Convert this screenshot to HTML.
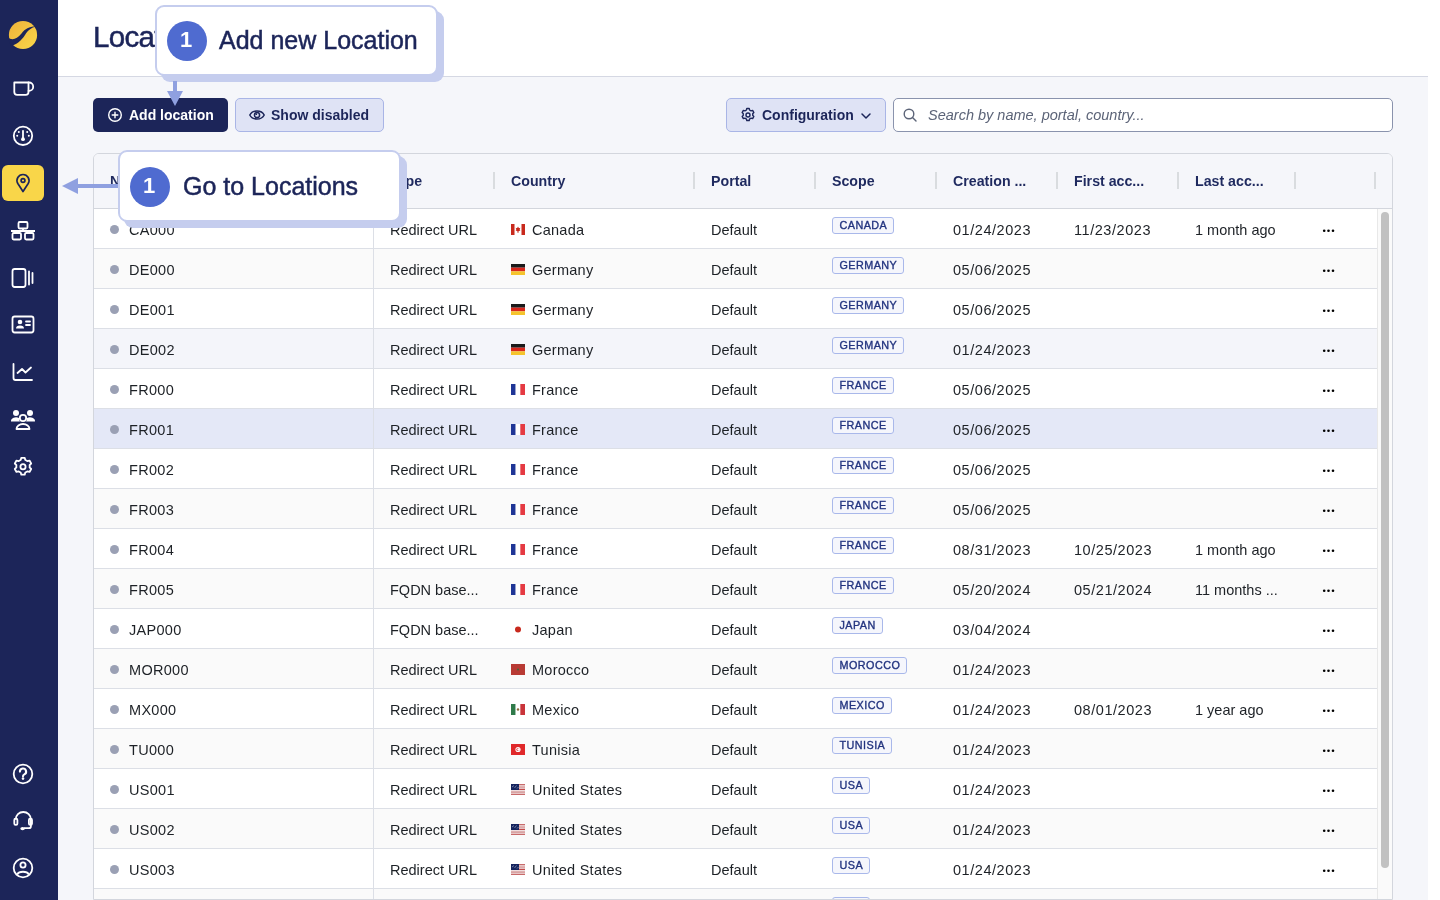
<!DOCTYPE html>
<html><head><meta charset="utf-8">
<style>
*{box-sizing:border-box;margin:0;padding:0}
html,body{width:1440px;height:900px;overflow:hidden;background:#fff;font-family:"Liberation Sans",sans-serif;}
#side{position:absolute;left:0;top:0;width:58px;height:900px;background:#1c2559;}
#side svg{position:absolute;left:0;top:0}
#active{position:absolute;left:2px;top:165px;width:42px;height:36px;background:#f9d649;border-radius:6px}
#main{position:absolute;left:58px;top:0;width:1370px;height:900px;background:#f5f6fa;}
#hdr{position:absolute;left:0;top:0;width:1370px;height:77px;background:#fff;border-bottom:1px solid #d5d8e3}
#title{position:absolute;left:35px;top:20px;font-size:29.5px;color:#1c2559;-webkit-text-stroke:0.5px #1c2559;letter-spacing:-0.7px}
.btn{position:absolute;top:98px;height:34px;border-radius:5px;font-size:14px;font-weight:bold;white-space:nowrap}
.btn span{position:absolute;top:9px}
#show span,#conf span{top:8px}
.btn svg{position:absolute}
#add{left:35px;width:135px;background:#1c2559;color:#fff}
#show{left:177px;width:149px;background:#dfe3f5;border:1px solid #a9b5e6;color:#1c2559}
#conf{left:668px;width:160px;background:#dfe3f5;border:1px solid #a9b5e6;color:#1c2559}
#search{position:absolute;left:835px;top:98px;width:500px;height:34px;background:#fff;border:1px solid #8a93ad;border-radius:5px}
#search span{position:absolute;left:34px;top:8px;font-size:14.5px;font-style:italic;color:#5c6478}
#search svg{position:absolute;left:8px;top:7.5px}
#table{position:absolute;left:93px;top:153px;width:1300px;height:747px;background:#fff;border:1px solid #d3d6dd;border-radius:6px 6px 0 0;overflow:hidden}
#thead{position:absolute;left:0;top:0;width:1298px;height:55px;background:#f5f6fa;border-bottom:1px solid #d3d6dd}
.h{position:absolute;top:19px;font-size:14.2px;font-weight:bold;color:#1f2a5f;white-space:nowrap}
.hs{position:absolute;top:18px;width:2px;height:17px;background:#d9dcdf}
.row{position:absolute;left:0;width:1283px;height:40px;border-bottom:1px solid #dcdfe6}
.t{position:absolute;top:13px;font-size:14.5px;color:#1d2126;white-space:nowrap}
.d{letter-spacing:0.55px}
.n{letter-spacing:0.3px}
.c{letter-spacing:0.25px}
.dot{position:absolute;left:16px;top:15.5px;width:9px;height:9px;border-radius:50%;background:#9aa0b4}
.sep{position:absolute;left:279px;top:0;width:1px;height:40px;background:#dcdfe6}
.flag{position:absolute;top:15px;width:14px;height:11px}
.flag svg{display:block}
.badge{position:absolute;top:8px;height:17px;padding:0 6px 0 6.5px;border:1px solid #a9b8ea;background:#f5f6fc;border-radius:3px;font-size:10.8px;font-weight:normal;-webkit-text-stroke:0.35px #22337f;color:#22337f;letter-spacing:0.45px;line-height:15px;white-space:nowrap}
.more{position:absolute;left:1228px;top:19px;width:14px;height:5px}
.more svg{display:block}
#track{position:absolute;left:1283px;top:55px;width:15px;height:760px;background:#fafafa;border-left:1px solid #e8e8e8}
#thumb{position:absolute;left:1287px;top:58px;width:8px;height:656px;border-radius:4px;background:#c1c1c1}
.co{position:absolute;background:#fff;border:2px solid #c5cdee;border-radius:9px;box-shadow:6px 6px 0 0 #c5cdee}
.co .num{position:absolute;width:40px;height:40px;border-radius:50%;background:#4f6bd0;color:#fff;font-size:22px;font-weight:bold;text-align:center;line-height:38px;text-indent:-2px}
.co .ct{position:absolute;font-size:25px;color:#1c2559;white-space:nowrap;-webkit-text-stroke:0.5px #1c2559}
.t,.h,.btn span,#search span,.co .ct,.co .num,#title,.badge{will-change:transform}
</style></head>
<body>
<div id="side">
  <div id="active"></div>
  <svg width="58" height="900" viewBox="0 0 58 900">
<defs><linearGradient id="lg" x1="0" y1="0" x2="1" y2="1"><stop offset="0" stop-color="#eeb23a"/><stop offset="1" stop-color="#fad84a"/></linearGradient></defs>
<circle cx="23" cy="35" r="14.1" fill="url(#lg)"/>
<path d="M7.5 37.2 C 12 40.8, 16.5 39.5, 21.5 33.5 C 25.5 28.5, 29.5 26.3, 36.5 26.6 C 31 27.6, 28 30.5, 25 35 C 21 41, 16.5 44.6, 11 45.8 Z" fill="#1c2559"/>
<g fill="none" stroke="#fff" stroke-width="1.8" stroke-linecap="round" stroke-linejoin="round">
 <path d="M14.3 82.5 H28.5 V92 a2.8 2.8 0 0 1 -2.8 2.8 H17.1 a2.8 2.8 0 0 1 -2.8 -2.8 Z"/>
 <path d="M28.5 82.5 H29 a4.2 4.2 0 0 1 0 8.4 H28.5"/>
 <circle cx="23" cy="135.8" r="9.2"/>
 <path d="M23 130.8 V138.5"/>
</g>
<g fill="#fff"><circle cx="23" cy="139.2" r="1.9"/><circle cx="18.8" cy="132" r="1"/><circle cx="27.2" cy="132" r="1"/><circle cx="17.2" cy="135.8" r="1"/><circle cx="28.8" cy="135.8" r="1"/></g>
<g fill="none" stroke="#1c2559" stroke-width="1.7" stroke-linejoin="round">
 <path d="M23 191.5 L17.8 183.5 A6 6 0 1 1 28.2 183.5 Z"/>
 <circle cx="23" cy="180.5" r="1.9"/>
</g>
<g fill="none" stroke="#fff" stroke-width="1.8" stroke-linejoin="round">
 <rect x="18.5" y="222" width="9" height="6.5" rx="1.2"/>
 <path d="M23 228.5 V231 M11 231 H35"/>
 <rect x="12.5" y="233" width="8.5" height="6.5" rx="1.2"/>
 <rect x="25" y="233" width="8.5" height="6.5" rx="1.2"/>
 <rect x="12.5" y="269" width="13" height="18" rx="2.2"/>
 <path d="M29 271.5 V284.5" stroke-linecap="round"/>
 <path d="M32.5 273 V283" stroke-linecap="round"/>
 <rect x="12.5" y="316.5" width="21" height="16" rx="2.2"/>
 <path d="M26 321.5 H30 M26 325 H30" stroke-linecap="round"/>
 <path d="M13.5 364 V378 a2 2 0 0 0 2 2 H32" stroke-linecap="round"/>
 <path d="M17.5 373 L22 369 L25.5 372.5 L31 367.5" stroke-linecap="round"/>
</g>
<g fill="#fff">
 <circle cx="20" cy="322" r="2.3"/>
 <path d="M16 328.5 a4 3 0 0 1 8 0 Z"/>
 <circle cx="16" cy="413" r="3"/>
 <circle cx="30" cy="413" r="3"/>
 <path d="M11 421.5 a5 4 0 0 1 8 -3.5 a4 4 0 0 0 1 3.5 Z"/>
 <path d="M35 421.5 a5 4 0 0 0 -8 -3.5 a4 4 0 0 1 -1 3.5 Z"/>
</g>
<g fill="none" stroke="#fff" stroke-width="1.8">
 <circle cx="23" cy="418" r="3.2"/>
 <path d="M16.5 429 a6.5 5 0 0 1 13 0 Z" stroke-linejoin="round"/>
 <g transform="translate(0 0.8)"><circle cx="23" cy="466" r="2.6"/>
 <path d="M21.3 457 h3.4 l0.6 2.2 a7 7 0 0 1 2 1.15 l2.2 -0.6 l1.7 2.95 l-1.6 1.6 a7 7 0 0 1 0 2.3 l1.6 1.6 l-1.7 2.95 l-2.2 -0.6 a7 7 0 0 1 -2 1.15 l-0.6 2.2 h-3.4 l-0.6 -2.2 a7 7 0 0 1 -2 -1.15 l-2.2 0.6 l-1.7 -2.95 l1.6 -1.6 a7 7 0 0 1 0 -2.3 l-1.6 -1.6 l1.7 -2.95 l2.2 0.6 a7 7 0 0 1 2 -1.15 Z" stroke-linejoin="round"/></g>
 <circle cx="23" cy="774" r="9.3"/>
 <path d="M19.9 771.6 a3.1 3.1 0 1 1 4.4 2.8 c-0.9 0.4 -1.3 1 -1.3 1.9" stroke-linecap="round" stroke-width="2.1"/>
 <path d="M15.7 818.7 V819.6 a7.6 7.6 0 0 1 15.2 0 V826.2 a2 2 0 0 1 -2 2 H24" />
 <rect x="14.3" y="818.7" width="3.1" height="6.2" rx="1.3"/>
 <rect x="28.9" y="818.7" width="3.1" height="6.2" rx="1.3"/>
 <circle cx="23" cy="868" r="9.3"/>
 <circle cx="23" cy="865" r="2.6"/>
 <path d="M17 874.5 a6.5 4.5 0 0 1 12 0"/>
</g>
<g fill="#fff"><circle cx="23" cy="778.6" r="1.3"/><ellipse cx="22.6" cy="828.6" rx="2.3" ry="1.7"/></g>
</svg>
</div>
<div id="main">
  <div id="hdr"><div id="title">Locations</div></div>
  <div class="btn" id="add"><svg style="left:14px;top:9px" width="16" height="16" viewBox="0 0 16 16"><g fill="none" stroke="#fff" stroke-width="1.4" stroke-linecap="round"><circle cx="8" cy="8" r="6.3"/><path d="M8 5.2V10.8M5.2 8H10.8"/></g></svg><span style="left:36px">Add location</span></div>
  <div class="btn" id="show"><svg style="left:12px;top:7px" width="18" height="18" viewBox="0 0 18 18"><g fill="none" stroke="#1c2559" stroke-width="1.5"><path d="M1.8 9 C4.5 3.6 13.5 3.6 16.2 9 C13.5 14.4 4.5 14.4 1.8 9 Z"/><circle cx="9" cy="9" r="2.6"/></g><circle cx="8.3" cy="8.2" r="0.9" fill="#1c2559"/></svg><span style="left:35px">Show disabled</span></div>
  <div class="btn" id="conf"><svg style="left:13px;top:8px" width="16" height="16" viewBox="0 0 16 16"><g fill="none" stroke="#1c2559" stroke-width="1.4" stroke-linejoin="round"><circle cx="8" cy="8" r="2"/><path d="M6.8 1.5h2.4l0.45 1.6a5 5 0 0 1 1.4 0.8l1.6-0.45l1.2 2.1l-1.15 1.15a5 5 0 0 1 0 1.6l1.15 1.15l-1.2 2.1l-1.6-0.45a5 5 0 0 1 -1.4 0.8l-0.45 1.6h-2.4l-0.45-1.6a5 5 0 0 1 -1.4-0.8l-1.6 0.45l-1.2-2.1l1.15-1.15a5 5 0 0 1 0-1.6l-1.15-1.15l1.2-2.1l1.6 0.45a5 5 0 0 1 1.4-0.8Z"/></g></svg><span style="left:35px">Configuration</span><svg style="left:133px;top:12px" width="12" height="10" viewBox="0 0 12 10"><path d="M2 3 L6 7 L10 3" fill="none" stroke="#1c2559" stroke-width="1.5" stroke-linecap="round" stroke-linejoin="round"/></svg></div>
  <div id="search"><svg width="16" height="16" viewBox="0 0 16 16"><g fill="none" stroke="#5c6478" stroke-width="1.4" stroke-linecap="round"><circle cx="7" cy="7" r="4.8"/><path d="M10.5 10.5 L14 14"/></g></svg><span>Search by name, portal, country...</span></div>
</div>
<div id="table">
  <div id="thead">
    <span class="h" style="left:16px">Name</span>
    <span class="hs" style="left:279px;width:1px"></span>
    <span class="h" style="left:296px">Type</span>
    <span class="hs" style="left:399px"></span>
    <span class="h" style="left:417px">Country</span>
    <span class="hs" style="left:599px"></span>
    <span class="h" style="left:617px">Portal</span>
    <span class="hs" style="left:720px"></span>
    <span class="h" style="left:738px">Scope</span>
    <span class="hs" style="left:841px"></span>
    <span class="h" style="left:859px">Creation ...</span>
    <span class="hs" style="left:962px"></span>
    <span class="h" style="left:980px">First acc...</span>
    <span class="hs" style="left:1083px"></span>
    <span class="h" style="left:1101px">Last acc...</span>
    <span class="hs" style="left:1200px"></span>
    <span class="hs" style="left:1280px"></span>
  </div>
  <div class="row" style="top:55px;background:#ffffff"><span class="dot"></span><span class="t n" style="left:35px">CA000</span><span class="sep"></span><span class="t" style="left:296px">Redirect URL</span><span class="flag" style="left:417px"><svg width="14" height="11" viewBox="0 0 14 11"><rect x="0" y="0" width="3.5" height="11" fill="#c8291d"/><rect x="10.5" y="0" width="3.5" height="11" fill="#c8291d"/><path d="M7 2.5 L8 4.2 L9.3 3.8 L8.7 6 L9.5 6.2 L7.4 7.6 L7.4 9 L6.6 9 L6.6 7.6 L4.5 6.2 L5.3 6 L4.7 3.8 L6 4.2 Z" fill="#c8291d"/></svg></span><span class="t c" style="left:438px">Canada</span><span class="t" style="left:617px">Default</span><span class="badge" style="left:738px">CANADA</span><span class="t d" style="left:859px">01/24/2023</span><span class="t d" style="left:980px">11/23/2023</span><span class="t" style="left:1101px">1 month ago</span><span class="more"><svg width="14" height="5" viewBox="0 0 14 5"><circle cx="2.2" cy="2.7" r="1.3"/><circle cx="6.5" cy="2.7" r="1.3"/><circle cx="11" cy="2.7" r="1.3"/></svg></span></div>
<div class="row" style="top:95px;background:#fafafa"><span class="dot"></span><span class="t n" style="left:35px">DE000</span><span class="sep"></span><span class="t" style="left:296px">Redirect URL</span><span class="flag" style="left:417px"><svg width="14" height="11" viewBox="0 0 14 11"><rect y="0" width="14" height="3.67" fill="#1a1a1a"/><rect y="3.67" width="14" height="3.67" fill="#d8261c"/><rect y="7.33" width="14" height="3.67" fill="#f5c42c"/></svg></span><span class="t c" style="left:438px">Germany</span><span class="t" style="left:617px">Default</span><span class="badge" style="left:738px">GERMANY</span><span class="t d" style="left:859px">05/06/2025</span><span class="more"><svg width="14" height="5" viewBox="0 0 14 5"><circle cx="2.2" cy="2.7" r="1.3"/><circle cx="6.5" cy="2.7" r="1.3"/><circle cx="11" cy="2.7" r="1.3"/></svg></span></div>
<div class="row" style="top:135px;background:#ffffff"><span class="dot"></span><span class="t n" style="left:35px">DE001</span><span class="sep"></span><span class="t" style="left:296px">Redirect URL</span><span class="flag" style="left:417px"><svg width="14" height="11" viewBox="0 0 14 11"><rect y="0" width="14" height="3.67" fill="#1a1a1a"/><rect y="3.67" width="14" height="3.67" fill="#d8261c"/><rect y="7.33" width="14" height="3.67" fill="#f5c42c"/></svg></span><span class="t c" style="left:438px">Germany</span><span class="t" style="left:617px">Default</span><span class="badge" style="left:738px">GERMANY</span><span class="t d" style="left:859px">05/06/2025</span><span class="more"><svg width="14" height="5" viewBox="0 0 14 5"><circle cx="2.2" cy="2.7" r="1.3"/><circle cx="6.5" cy="2.7" r="1.3"/><circle cx="11" cy="2.7" r="1.3"/></svg></span></div>
<div class="row" style="top:175px;background:#f4f5fa"><span class="dot"></span><span class="t n" style="left:35px">DE002</span><span class="sep"></span><span class="t" style="left:296px">Redirect URL</span><span class="flag" style="left:417px"><svg width="14" height="11" viewBox="0 0 14 11"><rect y="0" width="14" height="3.67" fill="#1a1a1a"/><rect y="3.67" width="14" height="3.67" fill="#d8261c"/><rect y="7.33" width="14" height="3.67" fill="#f5c42c"/></svg></span><span class="t c" style="left:438px">Germany</span><span class="t" style="left:617px">Default</span><span class="badge" style="left:738px">GERMANY</span><span class="t d" style="left:859px">01/24/2023</span><span class="more"><svg width="14" height="5" viewBox="0 0 14 5"><circle cx="2.2" cy="2.7" r="1.3"/><circle cx="6.5" cy="2.7" r="1.3"/><circle cx="11" cy="2.7" r="1.3"/></svg></span></div>
<div class="row" style="top:215px;background:#ffffff"><span class="dot"></span><span class="t n" style="left:35px">FR000</span><span class="sep"></span><span class="t" style="left:296px">Redirect URL</span><span class="flag" style="left:417px"><svg width="14" height="11" viewBox="0 0 14 11"><rect x="0" width="4.67" height="11" fill="#1f3596"/><rect x="4.67" width="4.67" height="11" fill="#fff"/><rect x="9.33" width="4.67" height="11" fill="#e53a42"/></svg></span><span class="t c" style="left:438px">France</span><span class="t" style="left:617px">Default</span><span class="badge" style="left:738px">FRANCE</span><span class="t d" style="left:859px">05/06/2025</span><span class="more"><svg width="14" height="5" viewBox="0 0 14 5"><circle cx="2.2" cy="2.7" r="1.3"/><circle cx="6.5" cy="2.7" r="1.3"/><circle cx="11" cy="2.7" r="1.3"/></svg></span></div>
<div class="row" style="top:255px;background:#e4e8f7"><span class="dot"></span><span class="t n" style="left:35px">FR001</span><span class="sep"></span><span class="t" style="left:296px">Redirect URL</span><span class="flag" style="left:417px"><svg width="14" height="11" viewBox="0 0 14 11"><rect x="0" width="4.67" height="11" fill="#1f3596"/><rect x="4.67" width="4.67" height="11" fill="#fff"/><rect x="9.33" width="4.67" height="11" fill="#e53a42"/></svg></span><span class="t c" style="left:438px">France</span><span class="t" style="left:617px">Default</span><span class="badge" style="left:738px">FRANCE</span><span class="t d" style="left:859px">05/06/2025</span><span class="more"><svg width="14" height="5" viewBox="0 0 14 5"><circle cx="2.2" cy="2.7" r="1.3"/><circle cx="6.5" cy="2.7" r="1.3"/><circle cx="11" cy="2.7" r="1.3"/></svg></span></div>
<div class="row" style="top:295px;background:#ffffff"><span class="dot"></span><span class="t n" style="left:35px">FR002</span><span class="sep"></span><span class="t" style="left:296px">Redirect URL</span><span class="flag" style="left:417px"><svg width="14" height="11" viewBox="0 0 14 11"><rect x="0" width="4.67" height="11" fill="#1f3596"/><rect x="4.67" width="4.67" height="11" fill="#fff"/><rect x="9.33" width="4.67" height="11" fill="#e53a42"/></svg></span><span class="t c" style="left:438px">France</span><span class="t" style="left:617px">Default</span><span class="badge" style="left:738px">FRANCE</span><span class="t d" style="left:859px">05/06/2025</span><span class="more"><svg width="14" height="5" viewBox="0 0 14 5"><circle cx="2.2" cy="2.7" r="1.3"/><circle cx="6.5" cy="2.7" r="1.3"/><circle cx="11" cy="2.7" r="1.3"/></svg></span></div>
<div class="row" style="top:335px;background:#fafafa"><span class="dot"></span><span class="t n" style="left:35px">FR003</span><span class="sep"></span><span class="t" style="left:296px">Redirect URL</span><span class="flag" style="left:417px"><svg width="14" height="11" viewBox="0 0 14 11"><rect x="0" width="4.67" height="11" fill="#1f3596"/><rect x="4.67" width="4.67" height="11" fill="#fff"/><rect x="9.33" width="4.67" height="11" fill="#e53a42"/></svg></span><span class="t c" style="left:438px">France</span><span class="t" style="left:617px">Default</span><span class="badge" style="left:738px">FRANCE</span><span class="t d" style="left:859px">05/06/2025</span><span class="more"><svg width="14" height="5" viewBox="0 0 14 5"><circle cx="2.2" cy="2.7" r="1.3"/><circle cx="6.5" cy="2.7" r="1.3"/><circle cx="11" cy="2.7" r="1.3"/></svg></span></div>
<div class="row" style="top:375px;background:#ffffff"><span class="dot"></span><span class="t n" style="left:35px">FR004</span><span class="sep"></span><span class="t" style="left:296px">Redirect URL</span><span class="flag" style="left:417px"><svg width="14" height="11" viewBox="0 0 14 11"><rect x="0" width="4.67" height="11" fill="#1f3596"/><rect x="4.67" width="4.67" height="11" fill="#fff"/><rect x="9.33" width="4.67" height="11" fill="#e53a42"/></svg></span><span class="t c" style="left:438px">France</span><span class="t" style="left:617px">Default</span><span class="badge" style="left:738px">FRANCE</span><span class="t d" style="left:859px">08/31/2023</span><span class="t d" style="left:980px">10/25/2023</span><span class="t" style="left:1101px">1 month ago</span><span class="more"><svg width="14" height="5" viewBox="0 0 14 5"><circle cx="2.2" cy="2.7" r="1.3"/><circle cx="6.5" cy="2.7" r="1.3"/><circle cx="11" cy="2.7" r="1.3"/></svg></span></div>
<div class="row" style="top:415px;background:#fafafa"><span class="dot"></span><span class="t n" style="left:35px">FR005</span><span class="sep"></span><span class="t" style="left:296px">FQDN base...</span><span class="flag" style="left:417px"><svg width="14" height="11" viewBox="0 0 14 11"><rect x="0" width="4.67" height="11" fill="#1f3596"/><rect x="4.67" width="4.67" height="11" fill="#fff"/><rect x="9.33" width="4.67" height="11" fill="#e53a42"/></svg></span><span class="t c" style="left:438px">France</span><span class="t" style="left:617px">Default</span><span class="badge" style="left:738px">FRANCE</span><span class="t d" style="left:859px">05/20/2024</span><span class="t d" style="left:980px">05/21/2024</span><span class="t" style="left:1101px">11 months ...</span><span class="more"><svg width="14" height="5" viewBox="0 0 14 5"><circle cx="2.2" cy="2.7" r="1.3"/><circle cx="6.5" cy="2.7" r="1.3"/><circle cx="11" cy="2.7" r="1.3"/></svg></span></div>
<div class="row" style="top:455px;background:#ffffff"><span class="dot"></span><span class="t n" style="left:35px">JAP000</span><span class="sep"></span><span class="t" style="left:296px">FQDN base...</span><span class="flag" style="left:417px"><svg width="14" height="11" viewBox="0 0 14 11"><circle cx="7" cy="5.5" r="3" fill="#c8291d"/></svg></span><span class="t c" style="left:438px">Japan</span><span class="t" style="left:617px">Default</span><span class="badge" style="left:738px">JAPAN</span><span class="t d" style="left:859px">03/04/2024</span><span class="more"><svg width="14" height="5" viewBox="0 0 14 5"><circle cx="2.2" cy="2.7" r="1.3"/><circle cx="6.5" cy="2.7" r="1.3"/><circle cx="11" cy="2.7" r="1.3"/></svg></span></div>
<div class="row" style="top:495px;background:#fafafa"><span class="dot"></span><span class="t n" style="left:35px">MOR000</span><span class="sep"></span><span class="t" style="left:296px">Redirect URL</span><span class="flag" style="left:417px"><svg width="14" height="11" viewBox="0 0 14 11"><rect width="14" height="11" fill="#b83a34"/><circle cx="7" cy="5.5" r="1" fill="#3d6b3a"/></svg></span><span class="t c" style="left:438px">Morocco</span><span class="t" style="left:617px">Default</span><span class="badge" style="left:738px">MOROCCO</span><span class="t d" style="left:859px">01/24/2023</span><span class="more"><svg width="14" height="5" viewBox="0 0 14 5"><circle cx="2.2" cy="2.7" r="1.3"/><circle cx="6.5" cy="2.7" r="1.3"/><circle cx="11" cy="2.7" r="1.3"/></svg></span></div>
<div class="row" style="top:535px;background:#ffffff"><span class="dot"></span><span class="t n" style="left:35px">MX000</span><span class="sep"></span><span class="t" style="left:296px">Redirect URL</span><span class="flag" style="left:417px"><svg width="14" height="11" viewBox="0 0 14 11"><rect x="0" width="4.67" height="11" fill="#2f7a4a"/><rect x="4.67" width="4.67" height="11" fill="#fff"/><rect x="9.33" width="4.67" height="11" fill="#c9343a"/><circle cx="7" cy="5.5" r="1.2" fill="#8a6a3a"/></svg></span><span class="t c" style="left:438px">Mexico</span><span class="t" style="left:617px">Default</span><span class="badge" style="left:738px">MEXICO</span><span class="t d" style="left:859px">01/24/2023</span><span class="t d" style="left:980px">08/01/2023</span><span class="t" style="left:1101px">1 year ago</span><span class="more"><svg width="14" height="5" viewBox="0 0 14 5"><circle cx="2.2" cy="2.7" r="1.3"/><circle cx="6.5" cy="2.7" r="1.3"/><circle cx="11" cy="2.7" r="1.3"/></svg></span></div>
<div class="row" style="top:575px;background:#fafafa"><span class="dot"></span><span class="t n" style="left:35px">TU000</span><span class="sep"></span><span class="t" style="left:296px">Redirect URL</span><span class="flag" style="left:417px"><svg width="14" height="11" viewBox="0 0 14 11"><rect width="14" height="11" fill="#e0282a"/><circle cx="7" cy="5.5" r="2.6" fill="#fff"/><circle cx="7" cy="5.5" r="1.6" fill="#e0282a"/><circle cx="7.6" cy="5.5" r="1.3" fill="#fff"/></svg></span><span class="t c" style="left:438px">Tunisia</span><span class="t" style="left:617px">Default</span><span class="badge" style="left:738px">TUNISIA</span><span class="t d" style="left:859px">01/24/2023</span><span class="more"><svg width="14" height="5" viewBox="0 0 14 5"><circle cx="2.2" cy="2.7" r="1.3"/><circle cx="6.5" cy="2.7" r="1.3"/><circle cx="11" cy="2.7" r="1.3"/></svg></span></div>
<div class="row" style="top:615px;background:#ffffff"><span class="dot"></span><span class="t n" style="left:35px">US001</span><span class="sep"></span><span class="t" style="left:296px">Redirect URL</span><span class="flag" style="left:417px"><svg width="14" height="11" viewBox="0 0 14 11"><rect width="14" height="11" fill="#f0dede"/><rect y="0" width="14" height="1.2" fill="#c86a6a"/><rect y="2.3" width="14" height="1.6" fill="#d9a3a3"/><rect y="4.8" width="14" height="1.2" fill="#c24a4a"/><rect y="7.2" width="14" height="1.8" fill="#d9a3a3"/><rect y="9.8" width="14" height="1.2" fill="#c86a6a"/><rect width="8" height="6" fill="#15245e"/><path d="M1 3 L3 1.5 M3.5 4 L5.5 1.5 M6 4.5 L7.5 3" stroke="#7d87aa" stroke-width="0.9"/></svg></span><span class="t c" style="left:438px">United States</span><span class="t" style="left:617px">Default</span><span class="badge" style="left:738px">USA</span><span class="t d" style="left:859px">01/24/2023</span><span class="more"><svg width="14" height="5" viewBox="0 0 14 5"><circle cx="2.2" cy="2.7" r="1.3"/><circle cx="6.5" cy="2.7" r="1.3"/><circle cx="11" cy="2.7" r="1.3"/></svg></span></div>
<div class="row" style="top:655px;background:#fafafa"><span class="dot"></span><span class="t n" style="left:35px">US002</span><span class="sep"></span><span class="t" style="left:296px">Redirect URL</span><span class="flag" style="left:417px"><svg width="14" height="11" viewBox="0 0 14 11"><rect width="14" height="11" fill="#f0dede"/><rect y="0" width="14" height="1.2" fill="#c86a6a"/><rect y="2.3" width="14" height="1.6" fill="#d9a3a3"/><rect y="4.8" width="14" height="1.2" fill="#c24a4a"/><rect y="7.2" width="14" height="1.8" fill="#d9a3a3"/><rect y="9.8" width="14" height="1.2" fill="#c86a6a"/><rect width="8" height="6" fill="#15245e"/><path d="M1 3 L3 1.5 M3.5 4 L5.5 1.5 M6 4.5 L7.5 3" stroke="#7d87aa" stroke-width="0.9"/></svg></span><span class="t c" style="left:438px">United States</span><span class="t" style="left:617px">Default</span><span class="badge" style="left:738px">USA</span><span class="t d" style="left:859px">01/24/2023</span><span class="more"><svg width="14" height="5" viewBox="0 0 14 5"><circle cx="2.2" cy="2.7" r="1.3"/><circle cx="6.5" cy="2.7" r="1.3"/><circle cx="11" cy="2.7" r="1.3"/></svg></span></div>
<div class="row" style="top:695px;background:#ffffff"><span class="dot"></span><span class="t n" style="left:35px">US003</span><span class="sep"></span><span class="t" style="left:296px">Redirect URL</span><span class="flag" style="left:417px"><svg width="14" height="11" viewBox="0 0 14 11"><rect width="14" height="11" fill="#f0dede"/><rect y="0" width="14" height="1.2" fill="#c86a6a"/><rect y="2.3" width="14" height="1.6" fill="#d9a3a3"/><rect y="4.8" width="14" height="1.2" fill="#c24a4a"/><rect y="7.2" width="14" height="1.8" fill="#d9a3a3"/><rect y="9.8" width="14" height="1.2" fill="#c86a6a"/><rect width="8" height="6" fill="#15245e"/><path d="M1 3 L3 1.5 M3.5 4 L5.5 1.5 M6 4.5 L7.5 3" stroke="#7d87aa" stroke-width="0.9"/></svg></span><span class="t c" style="left:438px">United States</span><span class="t" style="left:617px">Default</span><span class="badge" style="left:738px">USA</span><span class="t d" style="left:859px">01/24/2023</span><span class="more"><svg width="14" height="5" viewBox="0 0 14 5"><circle cx="2.2" cy="2.7" r="1.3"/><circle cx="6.5" cy="2.7" r="1.3"/><circle cx="11" cy="2.7" r="1.3"/></svg></span></div>
<div class="row" style="top:735px;background:#fafafa"><span class="dot"></span><span class="t n" style="left:35px">US004</span><span class="sep"></span><span class="t" style="left:296px">Redirect URL</span><span class="flag" style="left:417px"><svg width="14" height="11" viewBox="0 0 14 11"><rect width="14" height="11" fill="#f0dede"/><rect y="0" width="14" height="1.2" fill="#c86a6a"/><rect y="2.3" width="14" height="1.6" fill="#d9a3a3"/><rect y="4.8" width="14" height="1.2" fill="#c24a4a"/><rect y="7.2" width="14" height="1.8" fill="#d9a3a3"/><rect y="9.8" width="14" height="1.2" fill="#c86a6a"/><rect width="8" height="6" fill="#15245e"/><path d="M1 3 L3 1.5 M3.5 4 L5.5 1.5 M6 4.5 L7.5 3" stroke="#7d87aa" stroke-width="0.9"/></svg></span><span class="t c" style="left:438px">United States</span><span class="t" style="left:617px">Default</span><span class="badge" style="left:738px">USA</span><span class="t d" style="left:859px">01/24/2023</span><span class="more"><svg width="14" height="5" viewBox="0 0 14 5"><circle cx="2.2" cy="2.7" r="1.3"/><circle cx="6.5" cy="2.7" r="1.3"/><circle cx="11" cy="2.7" r="1.3"/></svg></span></div>
  <div id="track"></div>
  <div id="thumb"></div>
</div>
<!-- callouts -->
<div class="co" style="left:155px;top:5px;width:283px;height:71px">
  <div class="num" style="left:10px;top:14px">1</div>
  <div class="ct" style="left:62px;top:18.5px">Add new Location</div>
</div>
<svg style="position:absolute;left:0;top:0" width="1440" height="900">
  <rect x="173" y="81" width="4" height="11" fill="#8fa0e0"/>
  <path d="M167 91 L183 91 L175 106 Z" fill="#8fa0e0"/>
  <rect x="77" y="184" width="42" height="4" fill="#8fa0e0"/>
  <path d="M78 178 L78 194 L62 186 Z" fill="#8fa0e0"/>
</svg>
<div class="co" style="left:118px;top:150px;width:283px;height:72px">
  <div class="num" style="left:10px;top:15px">1</div>
  <div class="ct" style="left:63px;top:19.5px">Go to Locations</div>
</div>
</body></html>
